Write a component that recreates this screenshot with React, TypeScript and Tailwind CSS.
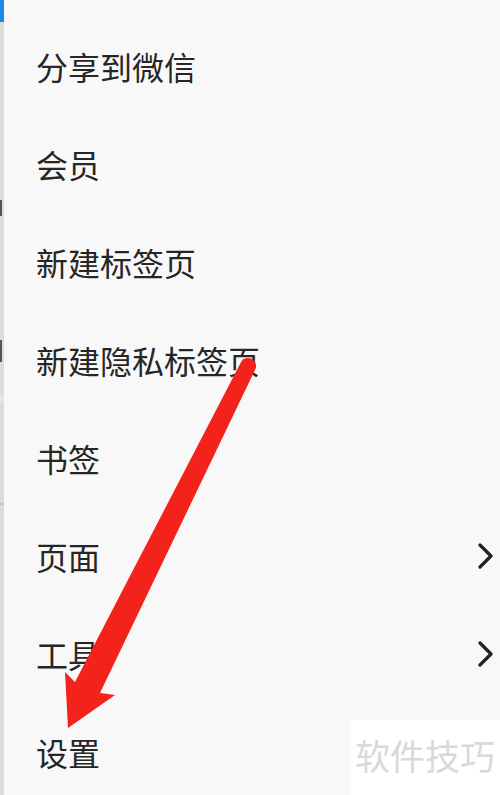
import React from "react";

const items = [
  { label: "分享到微信", chevron: false },
  { label: "会员", chevron: false },
  { label: "新建标签页", chevron: false },
  { label: "新建隐私标签页", chevron: false },
  { label: "书签", chevron: false },
  { label: "页面", chevron: true },
  { label: "工具", chevron: true },
  { label: "设置", chevron: false },
];

const font = { fontFamily: '"Noto Sans CJK SC", "Noto Sans", sans-serif' };

export default function App() {
  return (
    <div className="relative w-[500px] h-[795px] overflow-hidden bg-[#f8f8f8] flex" style={font}>
      {/* background page sliver */}
      <div className="w-[4px] h-full flex flex-col bg-[#dcdcd8] shrink-0">
        <div className="h-[22px] bg-[#1a8ae6]" />
        <div className="h-[178px]" />
        <div className="h-[16px] w-[2px] bg-[#555]" />
        <div className="h-[124px]" />
        <div className="h-[22px] w-[2px] bg-[#555]" />
        <div className="h-[33px]" />
        <div className="h-[8px] bg-[#e4e2ee]" />
        <div className="h-[100px]" />
        <div className="h-[2px] bg-[#c8c8c4]" />
      </div>

      <div className="flex-1 flex flex-col pt-[17px] pl-[32px]">
        {items.map((it) => (
          <div key={it.label} className="h-[98px] shrink-0 flex items-center justify-between">
            <span className="text-[32px] leading-none text-[#262626]">{it.label}</span>
            {it.chevron && (
              <svg width="20" height="26" viewBox="0 0 20 26" className="mr-[4px]">
                <polyline
                  points="4,2 15,13 4,24"
                  fill="none"
                  stroke="#222"
                  strokeWidth="3.2"
                  strokeLinecap="round"
                  strokeLinejoin="round"
                />
              </svg>
            )}
          </div>
        ))}
      </div>

      {/* arrow overlay */}
      <svg className="absolute left-0 top-0 pointer-events-none" width="500" height="795" viewBox="0 0 500 795">
        <path
          d="M240.8,362.4 L75,682 L65,672 L68,728 L115,695 L100,693 L255.2,369.6 A8,8 0 0 0 240.8,362.4 Z"
          fill="#f3221a"
        />
      </svg>

      {/* watermark */}
      <div className="absolute left-[350px] top-[720px] w-[150px] h-[75px] bg-white flex items-start pl-[5px] pt-[17px]">
        <span className="text-[35px] leading-none text-[#d9d9d9]">软件技巧</span>
      </div>
    </div>
  );
}
